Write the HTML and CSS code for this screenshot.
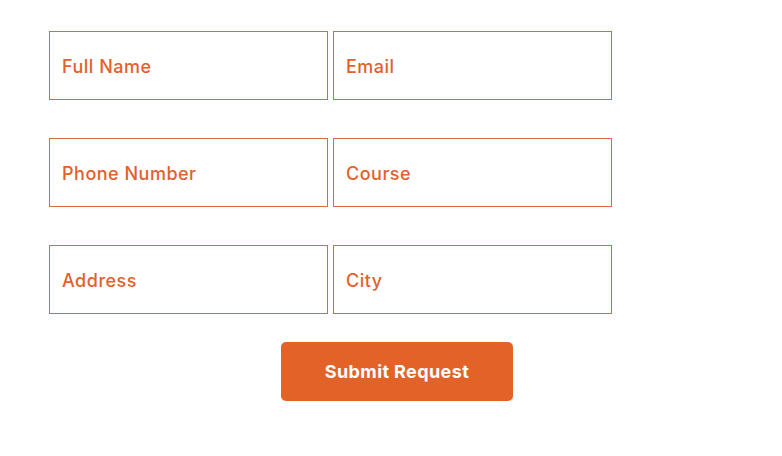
FILE: index.html
```html
<!DOCTYPE html>
<html lang="en">
<head>
<meta charset="utf-8">
<title>Request Form</title>
<link rel="stylesheet" href="styles.css">
</head>
<body>
<form class="form">
  <div class="grid">
    <div class="field">Full Name</div>
    <div class="field">Email</div>
    <div class="field">Phone Number</div>
    <div class="field">Course</div>
    <div class="field">Address</div>
    <div class="field">City</div>
  </div>
  <div class="actions">
    <button type="button" class="submit">Submit Request</button>
  </div>
</form>
</body>
</html>
```
FILE: styles.css
```css
html, body {
  margin: 0;
  background: #ffffff;
}
body {
  padding: 31px 0 0 49px;
  font-family: "Inter", "Open Sans", sans-serif;
}
.grid {
  display: grid;
  grid-template-columns: 279px 279px;
  column-gap: 5px;
  row-gap: 38px;
}
.field {
  box-sizing: border-box;
  height: 69px;
  border: 1px solid #d9693f;
  display: flex;
  align-items: center;
  padding: 2px 0 0 12px;
  color: #e2612b;
  font-size: 18px;
  font-weight: 500;
  letter-spacing: 0.5px;
}
.actions {
  margin-top: 28px;
  padding-left: 232px;
}
.submit {
  width: 232px;
  height: 59px;
  border: none;
  border-radius: 5px;
  background: #e36228;
  color: #ffffff;
  font-family: "Inter", "Open Sans", sans-serif;
  font-size: 18px;
  font-weight: 700;
  letter-spacing: 0.4px;
  cursor: pointer;
}
```
